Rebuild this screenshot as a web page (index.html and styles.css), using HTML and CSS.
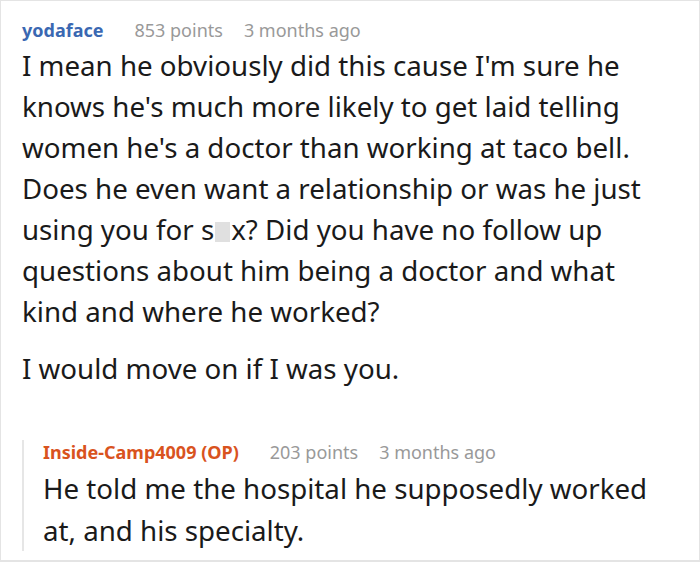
FILE: index.html
```html
<!DOCTYPE html>
<html>
<head>
<meta charset="utf-8">
<link rel="stylesheet" href="styles.css">
</head>
<body>
<div class="card">
  <div class="comment">
    <div class="meta">
      <span class="author">yodaface</span>
      <span class="info">853 points</span>
      <span class="info">3 months ago</span>
    </div>
    <div class="body">
      <p>I mean he obviously did this cause I'm sure he knows he's much more likely to get laid telling women he's a doctor than working at taco bell. Does he even want a relationship or was he just using you for s<span class="censor"></span>x? Did you have no follow up questions about him being a doctor and what kind and where he worked?</p>
      <p>I would move on if I was you.</p>
    </div>
    <div class="reply">
      <div class="meta">
        <span class="author op">Inside-Camp4009 (OP)</span>
        <span class="info">203 points</span>
        <span class="info">3 months ago</span>
      </div>
      <div class="body">
        <p>He told me the hospital he supposedly worked at, and his specialty.</p>
      </div>
    </div>
  </div>
</div>
</body>
</html>
```

FILE: styles.css
```css
* { box-sizing: border-box; }
html, body { margin: 0; padding: 0; background: #fff; }
.card {
  width: 700px;
  height: 562px;
  border: 1px solid #e4e4e4;
  border-bottom-width: 2px;
  font-family: "Noto Sans", "Open Sans", sans-serif;
  color: #1a1a1a;
  overflow: hidden;
}
.comment { padding: 17px 0 0 21px; width: 666px; }
.meta {
  display: flex;
  font-size: 18px;
  line-height: 24px;
  white-space: nowrap;
}
.author { font-weight: 700; color: #3a68b2; margin-right: 31px; }
.author.op { color: #d9531e; }
.info { color: #999; margin-right: 21px; }
.body { font-size: 27.7px; line-height: 41px; }
.body p { margin: 0; }
.body p + p { margin-top: 16px; }
.comment > .body { margin-top: 3px; }
.censor {
  display: inline-block;
  width: 15px;
  height: 20px;
  background: #e0e0e0;
  vertical-align: -2px;
  margin: 0 1px;
}
.reply {
  margin-top: 60px;
  border-left: 2px solid #e6e6e6;
  padding-left: 19px;
}
.reply .meta { margin-top: -9px; }
.reply .body { margin-top: 3px; line-height: 42px; margin-bottom: -10px; }
```
